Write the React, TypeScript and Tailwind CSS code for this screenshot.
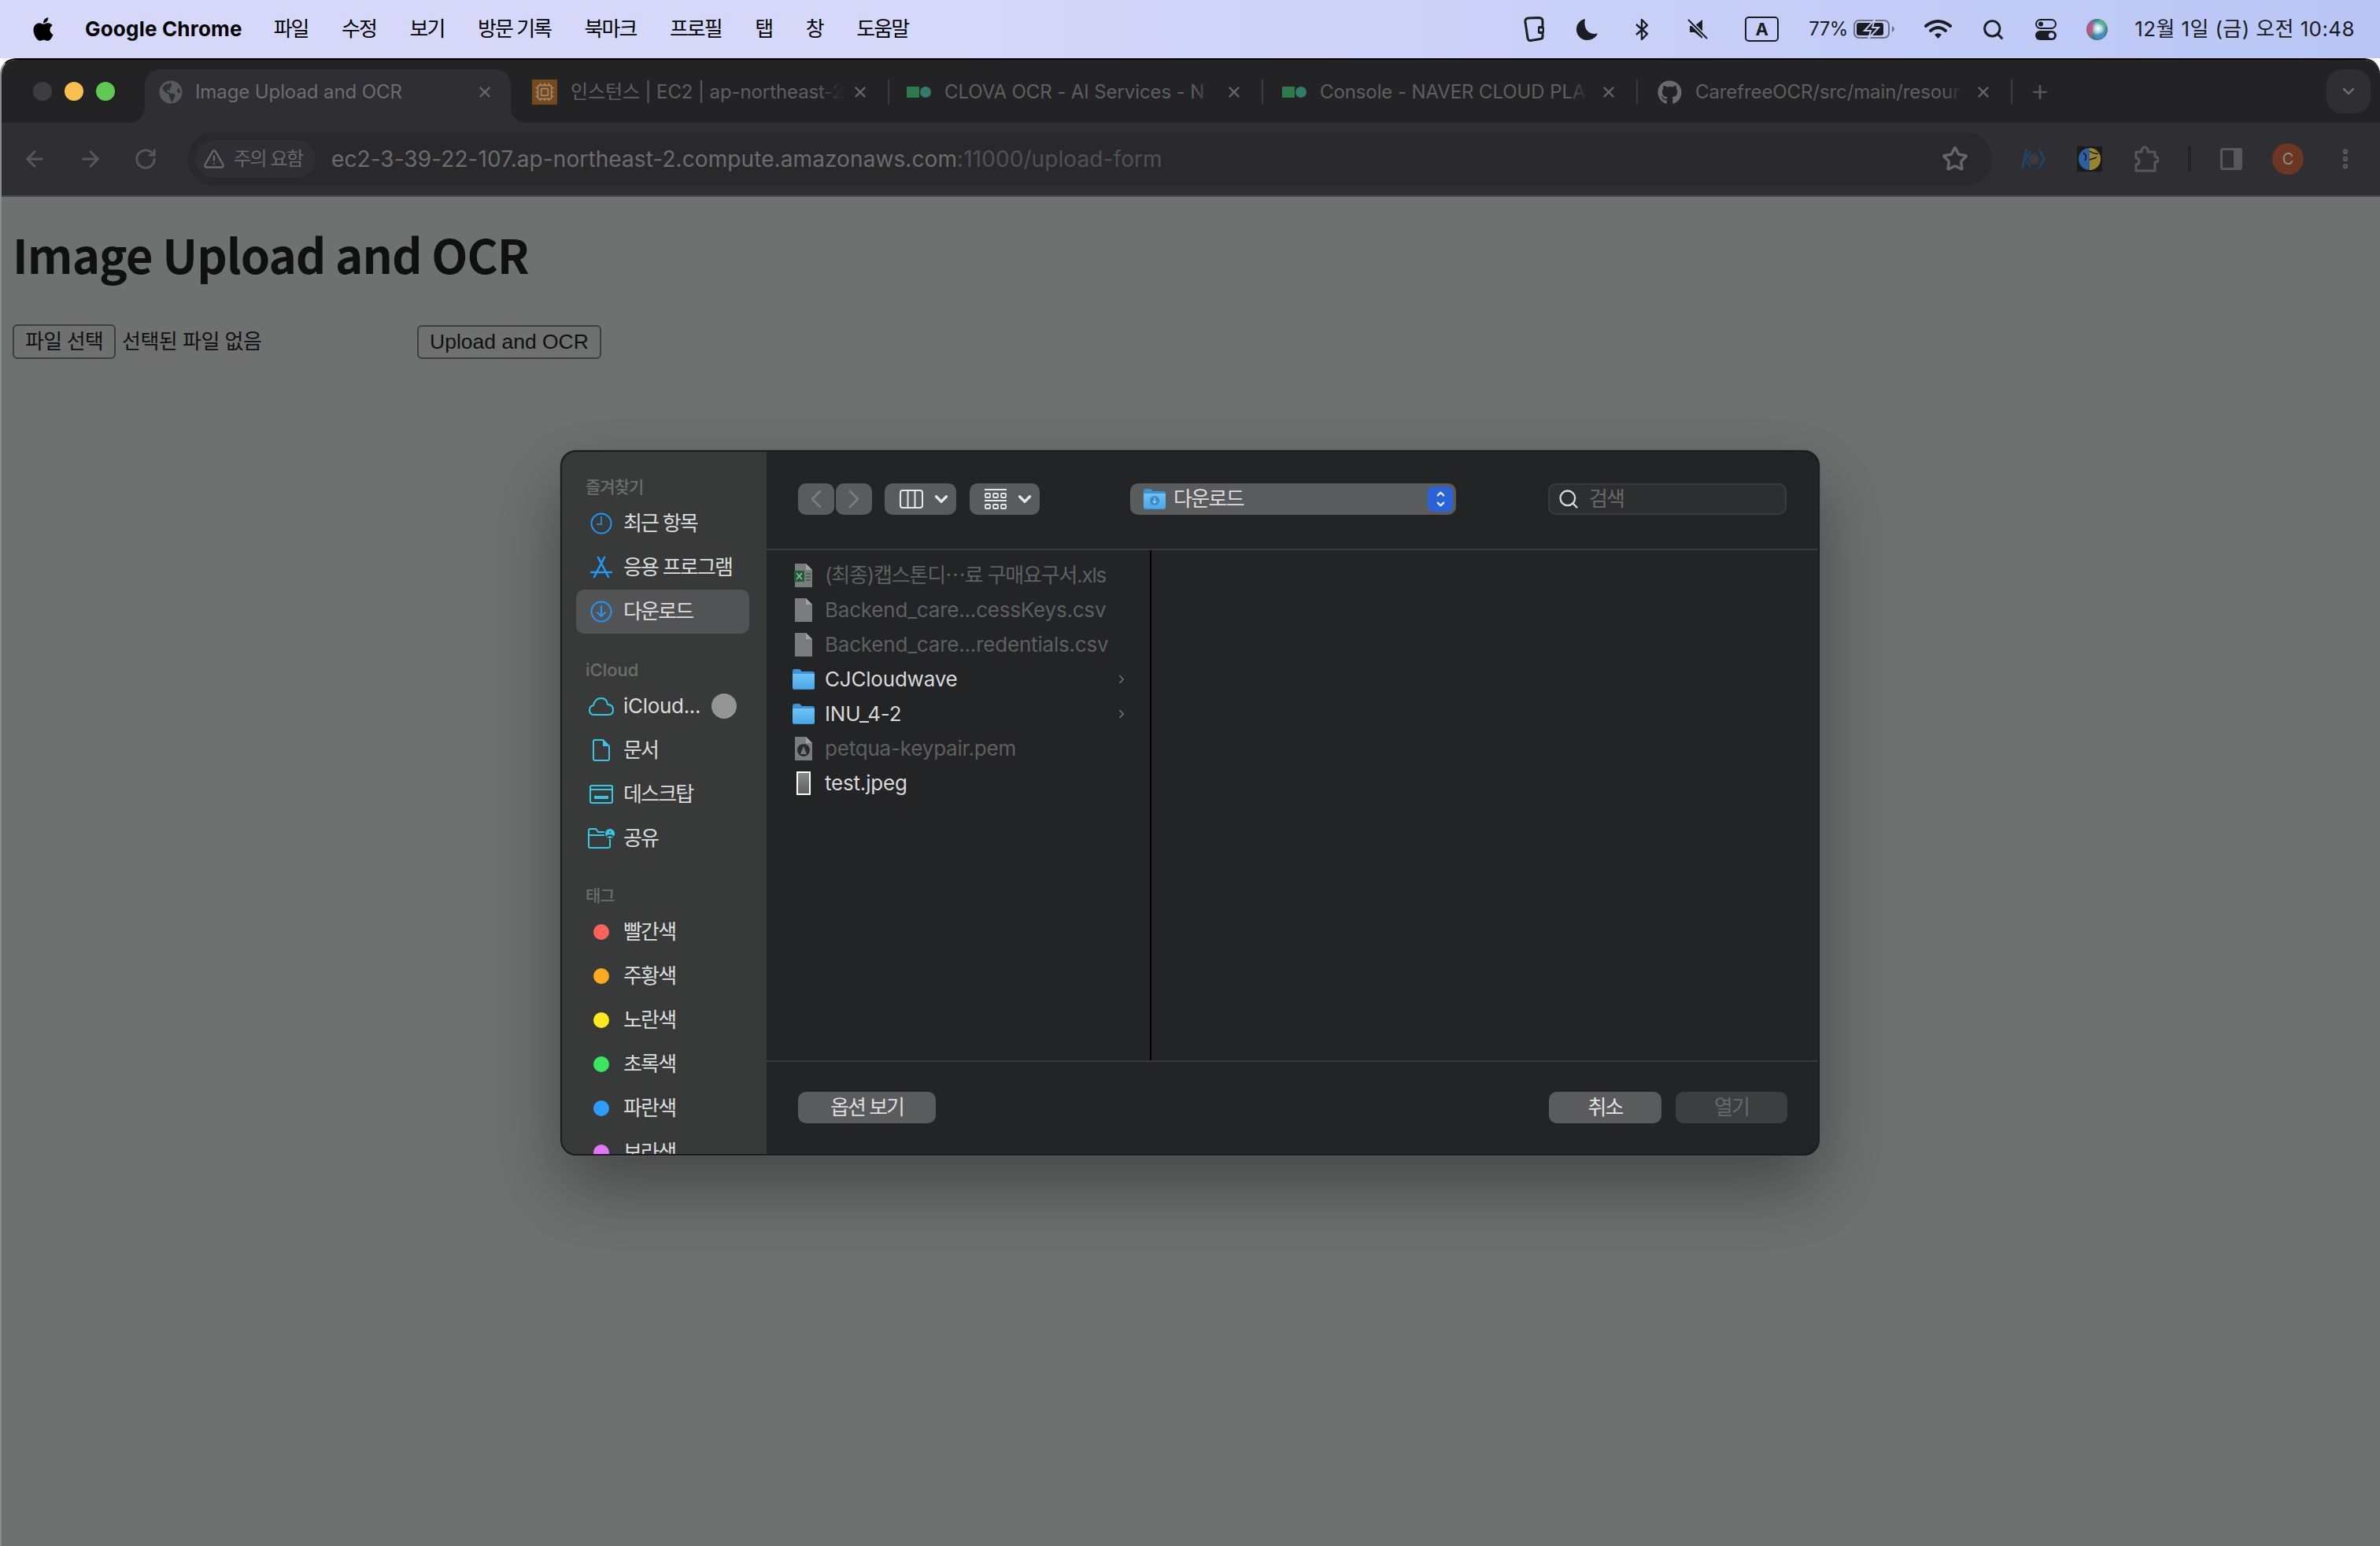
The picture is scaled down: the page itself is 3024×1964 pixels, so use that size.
import React from "react";
import {
  ArrowLeft,
  ArrowRight,
  ChevronDown,
  ChevronLeft,
  ChevronRight,
  ChevronUp,
  Cpu,
  EllipsisVertical,
  Plus,
  RotateCw,
  Search,
  Star,
  TriangleAlert,
  X,
} from "lucide-react";
import { FaApple, FaGithub, FaGlobeAmericas } from "react-icons/fa";

const Siri = () => (
  <svg width="27" height="27" viewBox="0 0 27 27">
    <defs>
      <radialGradient id="siriCore" cx="55%" cy="45%" r="55%">
        <stop offset="0%" stopColor="#ffffff" />
        <stop offset="30%" stopColor="#b8d8e8" />
        <stop offset="65%" stopColor="#3f8f9a" />
        <stop offset="100%" stopColor="#4b6a78" />
      </radialGradient>
    </defs>
    <circle cx="13.5" cy="13.5" r="13.5" fill="url(#siriCore)" />
    <path d="M1 17 A13 13 0 0 1 8 2 Q10 12 6 24 A13 13 0 0 1 1 17Z" fill="#d0507e" opacity="0.85" />
    <path d="M17 1 A13 13 0 0 1 26 10 Q20 9 14 5Z" fill="#59b58a" opacity="0.85" />
    <path d="M12 26 A13 13 0 0 0 25 18 Q18 17 12 22Z" fill="#3d8fd0" opacity="0.85" />
  </svg>
);

const MenuIcons = () => (
  <div className="flex items-center pr-[32px] text-[#1c1d22]">
    <svg width="26" height="32" viewBox="0 0 26 32" fill="none" stroke="currentColor" strokeWidth="3">
      <path d="M24 12 L24 6 Q24 1.500 19 1.500 L6 2 Q1.500 2.500 2 7 L5 27 Q5.500 31 9 30.500 L21 28.500 Q24 28 24 26 L24 22" strokeLinejoin="round" />
      <rect x="18" y="12" width="8" height="10" rx="2" fill="currentColor" stroke="none" />
      <circle cx="22" cy="17" r="2" fill="#c3ccf5" stroke="none" />
    </svg>
    <svg className="ml-[41px]" width="27" height="27" viewBox="0 0 27 27" fill="currentColor">
      <path d="M11 0 C4 1.500 0 7 0 13.500 C0 21 6 27 13.500 27 C19.500 27 24.500 24 27 18.500 C17 21 8 14 11 0Z" />
    </svg>
    <svg className="ml-[48px]" width="17" height="29" viewBox="0 0 17 29" fill="none" stroke="currentColor" strokeWidth="2.400" strokeLinejoin="round">
      <path d="M1 8 L15 20 L8 27 L8 2 L15 9 L1 21" />
    </svg>
    <svg className="ml-[49px]" width="26" height="26" viewBox="0 0 26 26" fill="currentColor">
      <path d="M3 9 L9 9 L19 1 L19 25 L9 17 L3 17Z" />
      <path d="M1 1 L25 25" stroke="#c3ccf5" strokeWidth="5" />
      <path d="M1 1 L25 25" stroke="currentColor" strokeWidth="2" />
    </svg>
    <div className="ml-[47px] flex h-[32px] w-[43px] items-center justify-center rounded-[5px] border-2 border-current text-[22px] leading-none font-bold">
      A
    </div>
    <span className="ml-[38px] w-[48px] text-[24px] leading-none tracking-[-0.5px] whitespace-nowrap">77%</span>
    <svg className="ml-[9px]" width="52" height="24" viewBox="0 0 52 24">
      <rect x="1" y="1" width="44" height="22" rx="6" fill="none" stroke="#6c7088" strokeWidth="2" />
      <rect x="4" y="4" width="34" height="16" rx="3" fill="#1c1d22" />
      <path d="M49 8 Q52 10 52 12 Q52 14 49 16Z" fill="#6c7088" />
      <path d="M27 0 L14 14 L22 14 L19 24 L32 10 L24 10Z" fill="#1c1d22" stroke="#c3ccf5" strokeWidth="2" />
    </svg>
    <svg className="ml-[38px]" width="35" height="26" viewBox="0 0 35 26" fill="none" stroke="currentColor" strokeWidth="4" strokeLinecap="round">
      <path d="M2 9 Q17.500 -3 33 9" />
      <path d="M8 15 Q17.500 7 27 15" />
      <path d="M13 20 L17.500 25 L22 20 Q17.500 16.500 13 20Z" fill="currentColor" stroke="none" />
    </svg>
    <Search className="ml-[38px]" size={29} strokeWidth={2.400} />
    <svg className="ml-[39px]" width="27" height="27" viewBox="0 0 27 27">
      <rect x="1" y="1" width="25" height="11" rx="5.500" fill="none" stroke="currentColor" strokeWidth="2" />
      <circle cx="7" cy="6.500" r="3" fill="currentColor" />
      <rect y="15" width="27" height="12" rx="6" fill="currentColor" />
      <circle cx="20.500" cy="21" r="3.500" fill="#c3ccf5" />
    </svg>
    <div className="ml-[38px]">
      <Siri />
    </div>
    <span className="ml-[34px] text-[26px] leading-none tracking-[0.4px] whitespace-nowrap">
      12월 1일 (금) 오전 10:48
    </span>
  </div>
);

const MenuBar = () => (
  <div className="flex h-[74px] items-center justify-between bg-gradient-to-r from-[#d6d8fa] from-[40%] to-[#b9c6f5] text-black">
    <div className="flex items-center pl-[38px]">
      <FaApple size={34} />
      <span className="ml-[36px] text-[26px] leading-none font-bold tracking-[0.2px]">Google Chrome</span>
      <div className="ml-[40px] flex gap-[42.6px] text-[26px] leading-none tracking-[-2px]">
        <span>파일</span>
        <span>수정</span>
        <span>보기</span>
        <span>방문 기록</span>
        <span>북마크</span>
        <span>프로필</span>
        <span>탭</span>
        <span>창</span>
        <span>도움말</span>
      </div>
    </div>
    <MenuIcons />
  </div>
);

const Tab = ({
  icon,
  title,
  className,
  active,
}: {
  icon: React.ReactNode;
  title: string;
  className: string;
  active?: boolean;
}) => (
  <div
    className={`relative flex h-[68px] flex-none items-center pb-[10px] ${className} ${
      active ? "rounded-t-[20px] bg-[#2e2e33] text-[#6d6d70]" : "text-[#5f5f62]"
    }`}
  >
    {active && (
      <>
        <span className="absolute bottom-0 left-[-20px] h-[20px] w-[20px] bg-[radial-gradient(circle_at_0_0,#232326_20px,#2e2e33_20px)]" />
        <span className="absolute right-[-20px] bottom-0 h-[20px] w-[20px] bg-[radial-gradient(circle_at_100%_0,#232326_20px,#2e2e33_20px)]" />
      </>
    )}
    <div className="flex h-[32px] w-[32px] flex-none items-center justify-center">{icon}</div>
    <div
      className={`relative min-w-0 flex-1 text-[24px] leading-[32px] tracking-[-0.1px] whitespace-nowrap ${
        active ? "ml-[15px]" : "ml-[17px]"
      }`}
    >
      {title}
      {!active && (
        <span className="absolute top-0 right-0 bottom-0 w-[30px] bg-gradient-to-r from-transparent to-[#232326]" />
      )}
    </div>
    <X
      className={`ml-[12px] flex-none text-[#68686b] ${active ? "mr-[22px]" : "mr-[24px]"}`}
      size={22}
      strokeWidth={2.500}
    />
  </div>
);

const NaverIcon = () => (
  <div className="flex items-center">
    <div className="h-[14px] w-[16px] bg-[#2f7a4b]" />
    <div className="ml-[1px] h-[14px] w-[14px] rounded-full bg-[#36796b]" />
  </div>
);

const TabSeparator = () => <div className="mb-[10px] h-[32px] w-[2px] bg-[#3a3a3d]" />;

const TabStrip = () => (
  <div className="relative flex h-[80px] items-end bg-[#232326]">
    <div className="absolute top-[28px] left-[40px] flex gap-[16px]">
      <div className="h-[24px] w-[24px] rounded-full bg-[#3d3d40]" />
      <div className="h-[24px] w-[24px] rounded-full bg-[#f8c04e]" />
      <div className="h-[24px] w-[24px] rounded-full bg-[#60c954]" />
    </div>
    <div className="flex pl-[182px]">
      <Tab
        active
        className="mr-[11px] w-[465px] pl-[17px]"
        icon={<FaGlobeAmericas size={30} className="text-[#58595c]" />}
        title="Image Upload and OCR"
      />
      <div className="flex items-center">
        <Tab
          className="w-[468px] pl-[16px]"
          icon={
            <div className="flex h-[32px] w-[32px] items-center justify-center bg-[#754820]">
              <Cpu size={26} className="text-[#a08a70]" strokeWidth={1.500} />
            </div>
          }
          title="인스턴스 | EC2 | ap-northeast-2"
        />
        <TabSeparator />
        <Tab className="w-[473px] pl-[21px]" icon={<NaverIcon />} title="CLOVA OCR - AI Services - N" />
        <TabSeparator />
        <Tab className="w-[474px] pl-[23px]" icon={<NaverIcon />} title="Console - NAVER CLOUD PLA" />
        <TabSeparator />
        <Tab
          className="w-[474px] pl-[24px]"
          icon={<FaGithub size={31} className="text-[#6b6b6e]" />}
          title="CarefreeOCR/src/main/resour"
        />
        <TabSeparator />
        <Plus className="mb-[10px] ml-[22px] text-[#59595c]" size={26} strokeWidth={2.500} />
      </div>
    </div>
    <div className="absolute top-[12px] right-[12px] flex h-[56px] w-[56px] items-center justify-center rounded-[20px] bg-[#2e2e33]">
      <ChevronDown size={24} className="text-[#6d6d70]" strokeWidth={2.500} />
    </div>
  </div>
);

const Toolbar = () => (
  <div className="flex h-[94px] flex-none items-center border-b-2 border-[#454548] bg-[#2e2e33] pl-[26px] text-[#58585c]">
    <ArrowLeft size={32} strokeWidth={2.200} />
    <ArrowRight className="ml-[39px]" size={32} strokeWidth={2.200} />
    <RotateCw className="ml-[39px]" size={30} strokeWidth={2.200} />
    <div className="ml-[39px] flex h-[68px] w-[2292px] flex-none items-center rounded-full bg-[#29292c] pr-[30px] pl-[9px]">
      <div className="flex h-[48px] w-[153px] flex-none items-center rounded-full bg-[#2e2e33] pl-[10px] text-[#68686b]">
        <TriangleAlert size={28} strokeWidth={2} />
        <span className="ml-[11px] text-[24px] leading-none tracking-[-1.500px] whitespace-nowrap">주의 요함</span>
      </div>
      <div className="ml-[20px] text-[28px] leading-none tracking-[0.09px] whitespace-nowrap text-[#6c6c70]">
        ec2-3-39-22-107.ap-northeast-2.compute.amazonaws.com<span className="text-[#515155]">:11000/upload-form</span>
      </div>
      <Star className="ml-auto text-[#66666a]" size={34} strokeWidth={2.500} />
    </div>
    <svg className="ml-[36px]" width="32" height="32" viewBox="0 0 32 32" fill="none" stroke="#1e4468" strokeWidth="3">
      <circle cx="17" cy="16" r="7" fill="#3b3b3e" stroke="none" />
      <path d="M8 3 L2 29 M13 6 L6 16 L13 26 M24 4 L30 16 L24 28" />
    </svg>
    <svg className="ml-[40px]" width="32" height="32" viewBox="0 0 32 32">
      <rect width="32" height="32" fill="#1b1b1b" />
      <circle cx="16" cy="16" r="14" fill="#2f5e9c" />
      <path d="M16 2 A14 14 0 0 1 16 30Z" fill="#9b8428" />
      <path d="M16 6 Q22 10 27 9 M16 17 L25 14 M8 8 Q14 12 10 18" stroke="#141414" strokeWidth="1.500" fill="none" />
    </svg>
    <svg className="ml-[40px]" width="32" height="34" viewBox="0 0 32 34" fill="none" stroke="#58585c" strokeWidth="3" strokeLinejoin="round">
      <path d="M3 8 L10 8 Q10 2 14 2 Q18 2 18 8 L27 8 L27 14 Q31 14 31 18 Q31 21 27 21 L27 32 L3 32 L3 24 Q7 24 7 20 Q7 16 3 16Z" />
    </svg>
    <div className="ml-[37px] h-[32px] w-[4px] flex-none rounded-full bg-[#232326]" />
    <svg className="ml-[37px]" width="28" height="28" viewBox="0 0 28 28">
      <rect x="1.500" y="1.500" width="25" height="25" rx="2" fill="none" stroke="#58585c" strokeWidth="3" />
      <rect x="17" y="1.500" width="10" height="25" fill="#58585c" />
    </svg>
    <div className="ml-[38px] flex h-[40px] w-[40px] flex-none items-center justify-center rounded-full bg-[#6b3622] text-[20px] leading-none text-[#8d8d8d]">
      C
    </div>
    <EllipsisVertical className="ml-[37px]" size={32} strokeWidth={3} />
  </div>
);

const Clock = () => (
  <svg width="28" height="28" viewBox="0 0 28 28" fill="none" stroke="#2396f8" strokeWidth="2">
    <circle cx="14" cy="14" r="12.500" />
    <path d="M14 5 L14 15 L8 15" strokeWidth="1.600" />
  </svg>
);

const Apps = () => (
  <svg width="28" height="28" viewBox="0 0 28 28" fill="none" stroke="#2396f8" strokeWidth="2.600" strokeLinecap="round">
    <path d="M10 1 L23 26 M18 1 L5 26 M1 20 L27 20" />
  </svg>
);

const DownloadCircle = () => (
  <svg width="28" height="28" viewBox="0 0 28 28" fill="none" stroke="#2396f8" strokeWidth="2">
    <circle cx="14" cy="14" r="12.500" />
    <path d="M14 7 L14 20 M9 15 L14 20 L19 15" strokeLinecap="round" strokeLinejoin="round" />
  </svg>
);

const CloudIcon = () => (
  <svg width="32" height="24" viewBox="0 0 32 24" fill="none" stroke="#38c6e6" strokeWidth="2">
    <path d="M7 23 Q1 23 1 17 Q1 12 6 11 Q8 2 16 2 Q23 2 24 10 Q31 10 31 17 Q31 23 25 23Z" strokeLinejoin="round" />
  </svg>
);

const DocIcon = () => (
  <svg width="22" height="28" viewBox="0 0 22 28" fill="none" stroke="#38c6e6" strokeWidth="2" strokeLinejoin="round">
    <path d="M3 1 L13 1 L21 9 L21 25 Q21 27 19 27 L3 27 Q1 27 1 25 L1 3 Q1 1 3 1Z" />
    <path d="M13 1 L13 9 L21 9" fill="#38c6e6" stroke="none" />
  </svg>
);

const DesktopIcon = () => (
  <svg width="30" height="24" viewBox="0 0 30 24" fill="none" stroke="#38c6e6" strokeWidth="2">
    <rect x="1" y="1" width="28" height="22" rx="2" />
    <path d="M1 6 L29 6" />
    <rect x="6" y="14" width="18" height="4" fill="#38c6e6" stroke="none" />
  </svg>
);

const SharedIcon = () => (
  <svg width="34" height="26" viewBox="0 0 34 26" fill="none" stroke="#38c6e6" strokeWidth="2">
    <path d="M1 23 L1 3 Q1 1 3 1 L10 1 L13 5 L21 5 M1 9 L21 9 M28 14 L28 23 Q28 25 26 25 L3 25 Q1 25 1 23" />
    <circle cx="28" cy="7" r="6" fill="#38c6e6" stroke="none" />
    <circle cx="28" cy="5" r="2" fill="#383a39" />
    <path d="M24 11 Q28 7 32 11" stroke="#383a39" strokeWidth="2" />
  </svg>
);

const SideLabel = ({ text, className }: { text: string; className: string }) => (
  <div className={`flex h-[32px] items-center pl-[30px] leading-none font-medium text-[#6c6e6e] ${className}`}>
    {text}
  </div>
);

const SideItem = ({
  icon,
  text,
  selected,
  latin,
  children,
}: {
  icon: React.ReactNode;
  text: string;
  selected?: boolean;
  latin?: boolean;
  children?: React.ReactNode;
}) => (
  <div className={`mr-[22px] ml-[18px] flex h-[56px] items-center rounded-[10px] ${selected ? "bg-[#525354]" : ""}`}>
    <div className="flex w-[64px] flex-none items-center justify-center">{icon}</div>
    <span
      className={`-ml-[4px] text-[26px] leading-none whitespace-nowrap text-[#dcdcdc] ${
        latin ? "tracking-[-0.3px]" : "tracking-[-1.800px]"
      }`}
    >
      {text}
    </span>
    {children}
  </div>
);

const TagDot = ({ color }: { color: string }) => <div className={`h-[20px] w-[20px] rounded-full ${color}`} />;

const Sidebar = () => (
  <div className="w-[260px] flex-none overflow-hidden rounded-l-[18px] bg-[#383a39] pt-[28px]">
    <SideLabel text="즐겨찾기" className="mb-[3px] text-[21px] tracking-[-1px]" />
    <SideItem icon={<Clock />} text="최근 항목" />
    <SideItem icon={<Apps />} text="응용 프로그램" />
    <SideItem icon={<DownloadCircle />} text="다운로드" selected />
    <SideLabel text="iCloud" className="mt-[30px] mb-[2px] text-[22px]" />
    <SideItem latin icon={<CloudIcon />} text="iCloud...">
      <div className="ml-[14px] h-[32px] w-[32px] flex-none rounded-full bg-[#959595]" />
    </SideItem>
    <SideItem icon={<DocIcon />} text="문서" />
    <SideItem icon={<DesktopIcon />} text="데스크탑" />
    <SideItem icon={<SharedIcon />} text="공유" />
    <SideLabel text="태그" className="mt-[28px] mb-[3px] text-[21px] tracking-[-1px]" />
    <SideItem icon={<TagDot color="bg-[#ff6259]" />} text="빨간색" />
    <SideItem icon={<TagDot color="bg-[#ffa91d]" />} text="주황색" />
    <SideItem icon={<TagDot color="bg-[#ffeb1a]" />} text="노란색" />
    <SideItem icon={<TagDot color="bg-[#3ae65c]" />} text="초록색" />
    <SideItem icon={<TagDot color="bg-[#2a9dff]" />} text="파란색" />
    <SideItem icon={<TagDot color="bg-[#e077fb]" />} text="보라색" />
  </div>
);

const Folder = ({ glyph }: { glyph?: boolean }) => (
  <svg width="28" height="26" viewBox="0 0 28 26">
    <defs>
      <linearGradient id="folderBody" x1="0" y1="0" x2="0" y2="1">
        <stop offset="0%" stopColor="#6cc4f5" />
        <stop offset="100%" stopColor="#4ba6e6" />
      </linearGradient>
    </defs>
    <path d="M0 3 Q0 0 3 0 L9 0 L12 3 L25 3 Q28 3 28 6 L28 24 Q28 26 26 26 L2 26 Q0 26 0 24Z" fill="#3e92d8" />
    <path d="M0 6 L28 6 L28 23 Q28 25 26 25 L2 25 Q0 25 0 23Z" fill="url(#folderBody)" />
    {glyph && (
      <g>
        <circle cx="14" cy="15" r="6" fill="#3b88c8" />
        <path d="M14 11 L14 18 M11.500 15.500 L14 18 L16.500 15.500" stroke="#9dd3f5" strokeWidth="1.200" fill="none" />
      </g>
    )}
  </svg>
);

const PageIcon = ({ children }: { children?: React.ReactNode }) => (
  <svg width="24" height="30" viewBox="0 0 24 30">
    <path d="M1 0 L15 0 L23 8 L23 30 L1 30Z" fill="#7b7c7d" />
    <path d="M15 0 L23 8 L15 8Z" fill="#a1a2a3" />
    {children}
  </svg>
);

const FileRow = ({
  icon,
  name,
  dim,
  folder,
  hangul,
}: {
  icon: React.ReactNode;
  name: string;
  dim?: boolean;
  folder?: boolean;
  hangul?: boolean;
}) => (
  <div className="flex h-[44px] items-center pl-[31px]">
    <div className="flex w-[32px] flex-none items-center justify-center">{icon}</div>
    <span
      className={`ml-[11px] text-[26px] leading-none whitespace-nowrap ${
        hangul ? "tracking-[-1.200px]" : "tracking-[-0.2px]"
      } ${dim ? "text-[#5f6062]" : "text-[#d8d8d8]"}`}
    >
      {name}
    </span>
    {folder && <ChevronRight className="mr-[27px] ml-auto text-[#77787a]" size={18} strokeWidth={2} />}
  </div>
);

const ToolButton = ({ className, children }: { className: string; children: React.ReactNode }) => (
  <div className={`flex h-[40px] flex-none items-center rounded-[10px] bg-[#5a5b5d] ${className}`}>
    {children}
  </div>
);

const DialogHeader = () => (
  <div className="flex h-[125px] flex-none border-b-2 border-[#38393b] pt-[40px] pl-[40px]">
    <ToolButton className="w-[46px] justify-center text-[#7d7e80]">
      <ChevronLeft size={40} strokeWidth={1.500} />
    </ToolButton>
    <ToolButton className="ml-[2px] w-[46px] justify-center text-[#7d7e80]">
      <ChevronRight size={40} strokeWidth={1.500} />
    </ToolButton>
    <ToolButton className="ml-[16px] w-[91px] pl-[19px] text-[#e8e8e8]">
      <svg width="30" height="24" viewBox="0 0 30 24" fill="none" stroke="currentColor" strokeWidth="2">
        <rect x="1" y="1" width="28" height="22" rx="3" />
        <path d="M10.500 1 L10.500 23 M19.500 1 L19.500 23" />
      </svg>
      <ChevronDown className="ml-[10px]" size={26} strokeWidth={3} />
    </ToolButton>
    <ToolButton className="ml-[17px] w-[89px] pl-[19px] text-[#e8e8e8]">
      <svg width="28" height="26" viewBox="0 0 28 26" fill="none" stroke="currentColor" strokeWidth="1.800">
        <path d="M0 1 L28 1 M0 15 L28 15" />
        <rect x="1" y="6" width="6" height="5" rx="1" />
        <rect x="11" y="6" width="6" height="5" rx="1" />
        <rect x="21" y="6" width="6" height="5" rx="1" />
        <rect x="1" y="20" width="6" height="5" rx="1" />
        <rect x="11" y="20" width="6" height="5" rx="1" />
        <rect x="21" y="20" width="6" height="5" rx="1" />
      </svg>
      <ChevronDown className="ml-[10px]" size={26} strokeWidth={3} />
    </ToolButton>
    <ToolButton className="ml-[115px] w-[414px] pr-[4px] pl-[17px]">
      <Folder glyph />
      <span className="ml-[10px] text-[26px] leading-none tracking-[-1.700px] text-[#dcdcdc]">다운로드</span>
      <div className="ml-auto flex h-[32px] w-[32px] flex-col items-center justify-center rounded-[7px] bg-[#2c62d8] text-[#e8ecf8]">
        <ChevronUp size={15} strokeWidth={3.500} className="-mb-[1px]" />
        <ChevronDown size={15} strokeWidth={3.500} className="-mt-[1px]" />
      </div>
    </ToolButton>
    <div className="ml-[117px] flex h-[40px] w-[303px] flex-none items-center rounded-[10px] border-2 border-[#3a3b3d] bg-[#2d2e30] pl-[10px]">
      <Search size={28} strokeWidth={2} className="text-[#d8d8d8]" />
      <span className="ml-[12px] text-[26px] leading-none tracking-[-2px] text-[#68696b]">검색</span>
    </div>
  </div>
);

const FileList = () => (
  <div className="flex min-h-0 flex-1">
    <div className="w-[489px] flex-none border-r-2 border-black pt-[10px]">
      <FileRow
        dim
        hangul
        name="(최종)캡스톤디⋯료 구매요구서.xls"
        icon={
          <PageIcon>
            <rect x="0" y="9" width="13" height="14" fill="#1f5c34" />
            <path d="M3 12 L10 20 M10 12 L3 20" stroke="#9bbfa8" strokeWidth="1.500" />
            <path d="M15 13 L21 13 M15 17 L21 17 M15 21 L21 21" stroke="#3f6a4c" strokeWidth="2" />
          </PageIcon>
        }
      />
      <FileRow dim name="Backend_care...cessKeys.csv" icon={<PageIcon />} />
      <FileRow dim name="Backend_care...redentials.csv" icon={<PageIcon />} />
      <FileRow folder name="CJCloudwave" icon={<Folder />} />
      <FileRow folder name="INU_4-2" icon={<Folder />} />
      <FileRow
        dim
        name="petqua-keypair.pem"
        icon={
          <PageIcon>
            <circle cx="12" cy="17" r="8" fill="#2a2b2c" />
            <path d="M12 12 L8 22 L16 22Z" fill="#77787a" />
          </PageIcon>
        }
      />
      <FileRow
        name="test.jpeg"
        icon={<div className="h-[30px] w-[18px] border-2 border-white bg-gradient-to-b from-[#8a8a8a] to-[#5f5f5f]" />}
      />
    </div>
  </div>
);

const FooterButton = ({ className, children }: { className: string; children: React.ReactNode }) => (
  <div className={`flex h-[40px] flex-none items-center justify-center rounded-[10px] text-[26px] leading-none tracking-[-2px] ${className}`}>
    {children}
  </div>
);

const DialogFooter = () => (
  <div className="flex h-[119px] flex-none border-t-2 border-[#38393b] pt-[38px] pl-[40px]">
    <FooterButton className="w-[175px] bg-[#5a5b5d] text-[#dcdcdc]">옵션 보기</FooterButton>
    <FooterButton className="ml-auto w-[143px] bg-[#5a5b5d] text-[#e4e4e4]">취소</FooterButton>
    <FooterButton className="mr-[39px] ml-[18px] w-[142px] bg-[#3d3e3f] text-[#68696b]">열기</FooterButton>
  </div>
);

const FileDialog = () => (
  <div className="absolute top-[572px] left-[712px] flex h-[896px] w-[1600px] rounded-[20px] border-2 border-[#1a1b1c] bg-[#232426] shadow-[0_0_0_1px_#5a5b5c,0_40px_90px_rgba(0,0,0,0.38)]">
    <Sidebar />
    <div className="flex min-w-0 flex-1 flex-col">
      <DialogHeader />
      <FileList />
      <DialogFooter />
    </div>
  </div>
);

const UploadPage = () => (
  <div className="flex-1 bg-[#6f7170] pt-[16px] pl-[14px] text-[#101010]">
    <h1 className="mt-[18px] text-[60px] leading-[76px] font-bold tracking-[-1px] [font-family:'Noto_Sans_CJK_KR',sans-serif]">
      Image Upload and OCR
    </h1>
    <div className="mt-[52px] flex items-center [font-family:'Liberation_Sans','Noto_Sans_CJK_KR',sans-serif]">
      <div className="flex h-[44px] w-[131px] items-center justify-center rounded-[6px] border-2 border-[#3d3e3d] text-[26px] leading-none tracking-[-0.8px]">
        파일 선택
      </div>
      <span className="ml-[8px] w-[375px] text-[26px] leading-none tracking-[-0.5px]">선택된 파일 없음</span>
      <div className="flex h-[43px] w-[234px] items-center justify-center rounded-[6px] border-2 border-[#3d3e3d] text-[26.5px] leading-none">
        Upload and OCR
      </div>
    </div>
  </div>
);

export default function App() {
  return (
    <div className="flex h-[1964px] w-[3024px] flex-col overflow-hidden [font-family:Inter,'Noto_Sans_CJK_KR',sans-serif]">
      <MenuBar />
      <div className="flex min-h-0 flex-1 flex-col overflow-hidden rounded-t-[20px] border-t-2 border-l-2 border-black border-l-[#8b8d8b]">
        <TabStrip />
        <Toolbar />
        <UploadPage />
      </div>
      <FileDialog />
    </div>
  );
}
